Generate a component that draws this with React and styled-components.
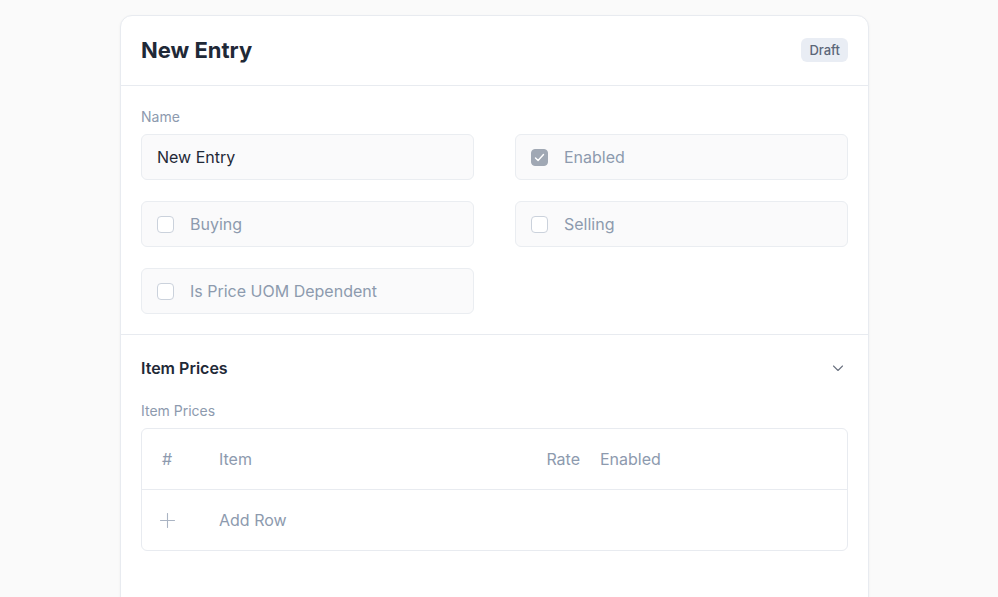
import React from "react"
import styled, { createGlobalStyle } from "styled-components"

const GlobalStyle = createGlobalStyle`
  html, body {
    margin: 0;
    padding: 0;
    background: #fafafa;
    font-family: Inter, "Noto Sans", sans-serif;
    color: #1f2937;
  }
  * { box-sizing: border-box; }
`

function CheckIcon() {
  return (
    <svg width="13" height="13" viewBox="0 0 12 12" fill="none">
      <path d="M2.3 6.4l2.4 2.4 5-5.6" stroke="#fff" strokeWidth="1.3" strokeLinecap="round" strokeLinejoin="round" />
    </svg>
  )
}

function Checkbox({ label, checked }) {
  return (
    <CheckField>
      <Box checked={checked}>{checked && <CheckIcon />}</Box>
      <CheckLabel>{label}</CheckLabel>
    </CheckField>
  )
}

export default function App() {
  return (
    <>
      <GlobalStyle />
      <Page>
        <Card>
          <Header>
            <Title>New Entry</Title>
            <Badge>Draft</Badge>
          </Header>

          <FormSection>
            <Grid>
              <Field>
                <Label>Name</Label>
                <Input>New Entry</Input>
              </Field>
              <Checkbox label="Enabled" checked />
              <Checkbox label="Buying" />
              <Checkbox label="Selling" />
              <Checkbox label="Is Price UOM Dependent" />
            </Grid>
          </FormSection>

          <Section>
            <SectionHead>
              <SectionTitle>Item Prices</SectionTitle>
              <svg width="16" height="16" viewBox="0 0 16 16" fill="none">
                <path d="M3.5 6l4.5 4.5L12.5 6" stroke="#6b7280" strokeWidth="1.1" strokeLinecap="round" strokeLinejoin="round" />
              </svg>
            </SectionHead>
            <Label>Item Prices</Label>
            <Table>
              <Row header>
                <Cell>#</Cell>
                <Cell>Item</Cell>
                <Cell right>Rate</Cell>
                <Cell>Enabled</Cell>
              </Row>
              <Row>
                <Cell>
                  <AddIcon width="15" height="15" viewBox="0 0 15 15" fill="none">
                    <path d="M7.5 0.5v14M0.5 7.5h14" stroke="#aab4c3" strokeWidth="1.1" strokeLinecap="round" />
                  </AddIcon>
                </Cell>
                <Cell>Add Row</Cell>
              </Row>
            </Table>
          </Section>
        </Card>
      </Page>
    </>
  )
}

const Page = styled.div`
  display: flex;
  justify-content: center;
  padding: 15px 9px 0 0;
  height: 597px;
  overflow: hidden;
`

const Card = styled.div`
  width: 749px;
  height: 640px;
  background: #fff;
  border: 1px solid #e8ebf0;
  border-radius: 12px;
  box-shadow: 0 1px 3px rgba(0, 0, 0, 0.05);
`

const Header = styled.div`
  height: 70px;
  display: flex;
  align-items: center;
  justify-content: space-between;
  padding: 0 20px 1px;
  border-bottom: 1px solid #e8ebf0;
`

const Title = styled.h1`
  margin: 0;
  font-size: 22px;
  font-weight: 700;
  color: #1f2937;
`

const Badge = styled.span`
  background: #e9edf4;
  color: #5b6678;
  font-size: 13px;
  font-weight: 500;
  padding: 4px 8px;
  border-radius: 6px;
`

const FormSection = styled.div`
  padding: 22px 20px 20px;
  border-bottom: 1px solid #e8ebf0;
`

const Grid = styled.div`
  display: grid;
  grid-template-columns: 1fr 1fr;
  column-gap: 41px;
  row-gap: 21px;
  align-items: end;
`

const Field = styled.div`
  display: flex;
  flex-direction: column;
`

const Label = styled.div`
  font-size: 14px;
  color: #8d9aae;
  margin-bottom: 9px;
`

const Input = styled.div`
  height: 46px;
  display: flex;
  align-items: center;
  padding: 0 15px;
  background: #fafafb;
  border: 1px solid #eaedf1;
  border-radius: 6px;
  font-size: 16px;
  color: #1f2937;
`

const CheckField = styled(Input)`
  gap: 16px;
  color: #8d9aae;
`

const Box = styled.span`
  width: 17px;
  height: 17px;
  border-radius: 4px;
  display: flex;
  align-items: center;
  justify-content: center;
  background: ${(p) => (p.checked ? "#a0a8b4" : "#fff")};
  border: 1px solid ${(p) => (p.checked ? "#a0a8b4" : "#cbd2dc")};
`

const CheckLabel = styled.span`
  font-size: 16px;
`

const Section = styled.div`
  padding: 21px 20px;
`

const SectionHead = styled.div`
  display: flex;
  align-items: center;
  justify-content: space-between;
  height: 24px;
  margin-bottom: 22px;
  padding-right: 2px;
`

const SectionTitle = styled.h2`
  margin: 0;
  font-size: 16px;
  font-weight: 600;
  color: #1f2937;
`

const Table = styled.div`
  border: 1px solid #e8ebf0;
  border-radius: 6px;
`

const Row = styled.div`
  box-sizing: content-box;
  display: grid;
  grid-template-columns: 37px 1fr 60px 227px;
  column-gap: 20px;
  align-items: center;
  height: 60px;
  padding: 0 20px;
  font-size: 16px;
  color: #8d9aae;
  border-bottom: ${(p) => (p.header ? "1px solid #e8ebf0" : "none")};
`

const Cell = styled.div`
  display: flex;
  align-items: center;
  justify-content: ${(p) => (p.right ? "flex-end" : "flex-start")};
`

const AddIcon = styled.svg`
  margin-left: -2px;
`
